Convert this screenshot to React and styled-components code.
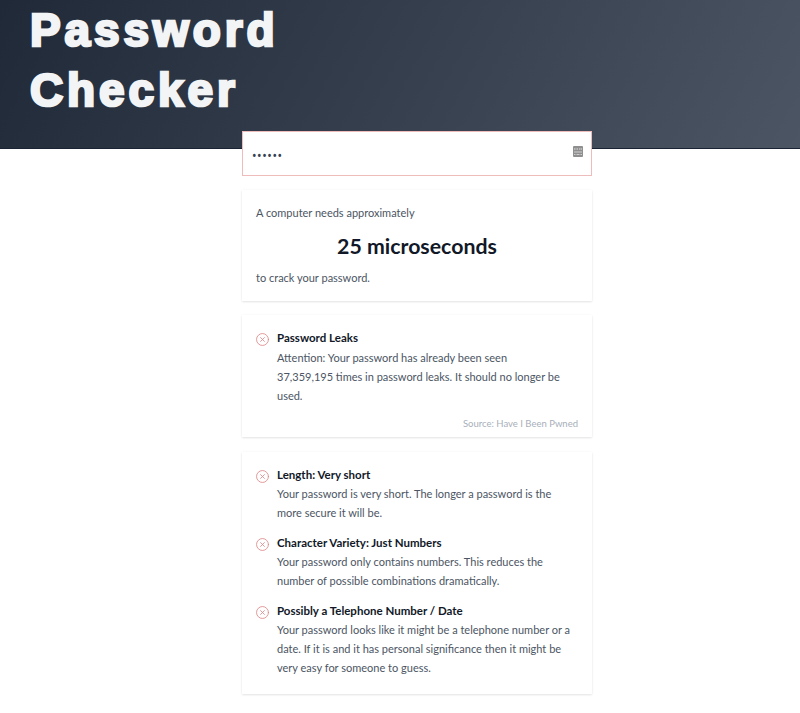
import React from "react";
import styled, { createGlobalStyle } from "styled-components";

const Global = createGlobalStyle`
  html, body { margin: 0; padding: 0; background: #fff; }
  body { font-family: "Lato", "Noto Sans", sans-serif; color: #4b5563; }
`;
const Page = styled.div`
  width: 800px;
  height: 713px;
  overflow: hidden;
`;
const Header = styled.header`
  height: 149px;
  box-sizing: border-box;
  padding-left: 30px;
  background: linear-gradient(118deg, #1f2937 0%, #4b5563 100%);
  border-bottom: 1px solid #1a2333;
`;
const Title = styled.h1`
  margin: 0;
  width: 300px;
  font-family: "Liberation Sans", Arial, sans-serif;
  font-weight: 700;
  font-size: 46px;
  line-height: 60px;
  letter-spacing: 3.9px;
  color: #f3f4f6;
  -webkit-text-stroke: 2.6px #f3f4f6;
`;
const Column = styled.main`
  width: 350px;
  margin: -18px 0 0 242px;
  display: flex;
  flex-direction: column;
  position: relative;
`;
const Field = styled.div`
  height: 45px;
  box-sizing: border-box;
  background: #fff;
  border: 1px solid #efbcbc;
  display: flex;
  align-items: center;
  justify-content: space-between;
  padding: 0 8px 0 9px;
  margin-bottom: 14px;
`;
const Dots = styled.span`
  font-family: "Noto Sans", sans-serif;
  font-size: 12px;
  letter-spacing: 0.6px;
  color: #374151;
  line-height: 1;
  margin-top: 4px;
`;
const KeyIcon = styled.svg`
  width: 10px;
  height: 11px;
  margin-top: -4px;
`;
const Card = styled.section`
  background: #fff;
  box-sizing: border-box;
  height: ${(p) => p.$height}px;
  margin-bottom: ${(p) => p.$gap}px;
  padding: 13px 14px 14px;
  box-shadow: 0 1px 2px rgba(0, 0, 0, 0.1), 0 0 3px rgba(0, 0, 0, 0.03);
`;
const Plain = styled.p`
  margin: 0;
  font-size: 11px;
  line-height: 19px;
  color: #4b5563;
`;
const Big = styled.div`
  font-size: 21.3px;
  font-weight: 700;
  line-height: 28px;
  text-align: center;
  color: #111827;
  margin: 10px 0 8px;
`;
const Item = styled.div`
  display: flex;
  gap: 8px;
  margin-bottom: ${(p) => p.$gap || 0}px;
`;
const Cross = styled.svg`
  flex: none;
  width: 13px;
  height: 13px;
  margin-top: 5px;
`;
const Body = styled.div`
  flex: 1;
  min-width: 0;
`;
const ItemTitle = styled.div`
  font-size: 11.5px;
  font-weight: 700;
  line-height: 19px;
  color: #111827;
  margin-bottom: ${(p) => p.$after || 0}px;
`;
const Source = styled.div`
  font-size: 9.5px;
  line-height: 14px;
  color: #a8afb9;
  text-align: right;
  margin-top: 12px;
`;

const CrossIcon = () => (
  <Cross viewBox="0 0 24 24" fill="none" stroke="#e08a8a" strokeWidth="1.6" strokeLinecap="round">
    <circle cx="12" cy="12" r="11" />
    <path d="M8.5 8.5l7 7M15.5 8.5l-7 7" />
  </Cross>
);

const Check = ({ title, gap, after, children }) => (
  <Item $gap={gap}>
    <CrossIcon />
    <Body>
      <ItemTitle $after={after}>{title}</ItemTitle>
      <Plain>{children}</Plain>
    </Body>
  </Item>
);

export default function App() {
  return (
    <Page>
      <Global />
      <Header>
        <Title>Password Checker</Title>
      </Header>
      <Column>
        <Field>
          <Dots>••••••</Dots>
          <KeyIcon viewBox="0 0 10 11">
            <rect width="10" height="11" rx="1" fill="#8f8f8f" />
            <path d="M1 3h1.5M3.5 3h1.5M6 3h1.5M8 3h1" stroke="#e4e4e4" strokeWidth="1" />
            <path d="M1 6h8M1 8.5h1.5M3.5 8.5h3M7.5 8.5h1.5" stroke="#d0d0d0" strokeWidth="1" />
          </KeyIcon>
        </Field>
        <Card $height={111} $gap={14}>
          <Plain>A computer needs approximately</Plain>
          <Big>25 microseconds</Big>
          <Plain>to crack your password.</Plain>
        </Card>
        <Card $height={122} $gap={15}>
          <Check title="Password Leaks" after={1}>
            Attention: Your password has already been seen<br />
            37,359,195 times in password leaks. It should no longer be<br />
            used.
          </Check>
          <Source>Source: Have I Been Pwned</Source>
        </Card>
        <Card $height={242} $gap={0}>
          <Check title="Length: Very short" gap={11}>
            Your password is very short. The longer a password is the more secure it will be.
          </Check>
          <Check title="Character Variety: Just Numbers" gap={11}>
            Your password only contains numbers. This reduces the number of possible combinations dramatically.
          </Check>
          <Check title="Possibly a Telephone Number / Date">
            Your password looks like it might be a telephone number or a date. If it is and it has personal significance then it might be very easy for someone to guess.
          </Check>
        </Card>
      </Column>
    </Page>
  );
}
